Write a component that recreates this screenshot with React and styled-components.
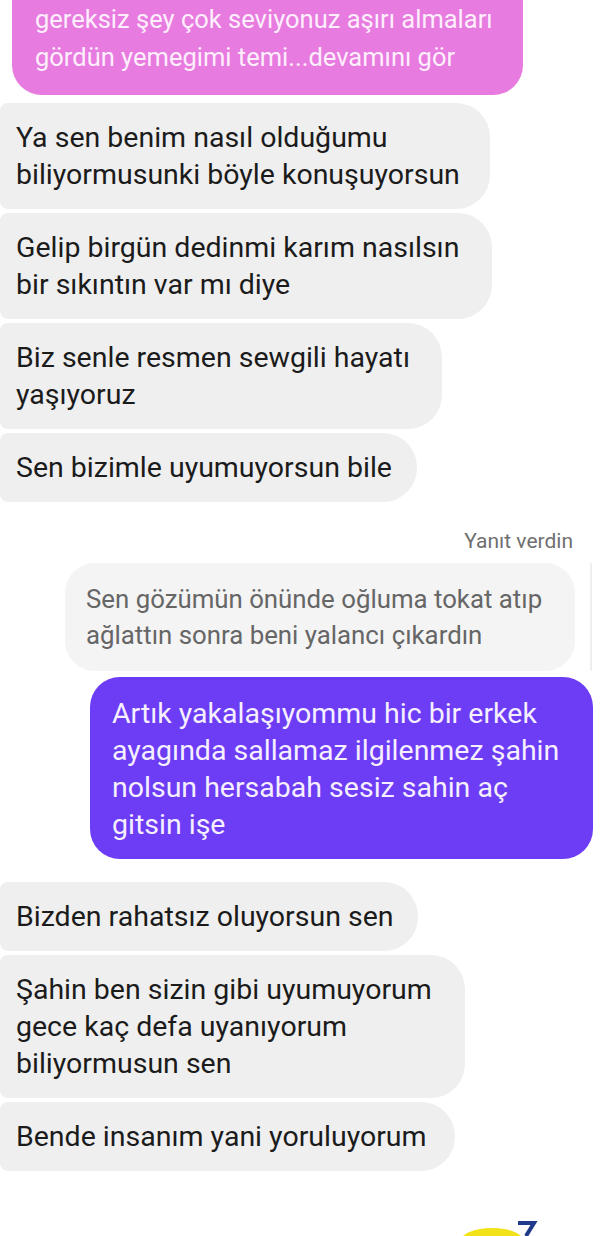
import React from 'react';
import styled, { createGlobalStyle } from 'styled-components';

const GlobalStyle = createGlobalStyle`
  html, body {
    margin: 0;
    padding: 0;
    background: #ffffff;
    overflow: hidden;
  }
  body {
    font-family: Roboto, "Noto Sans", "Liberation Sans", sans-serif;
    -webkit-font-smoothing: antialiased;
  }
`;

const Screen = styled.div`
  width: 604px;
  height: 1236px;
  overflow: hidden;
  position: relative;
  display: flex;
  flex-direction: column;
  background: #ffffff;
`;

const Group = styled.div`
  display: flex;
  flex-direction: column;
  gap: 4px;
  margin-top: ${p => p.$top || 0}px;
`;

const Bubble = styled.div`
  box-sizing: border-box;
  width: ${p => p.$width}px;
  padding: 16px 0 16px 16px;
  background: #efefef;
  color: #1b1b1b;
  font-size: 28.5px;
  line-height: 37px;
  border-radius: 8px 34px 34px 8px;
  align-self: flex-start;
`;

const Line = styled.div`
  white-space: nowrap;
`;

const PinkBubble = styled.div`
  box-sizing: border-box;
  width: 511px;
  margin: -34px 0 0 12px;
  padding: 34px 0 19px 23px;
  background: #e77bdf;
  color: #fdeefc;
  font-size: 25.5px;
  line-height: 38px;
  border-radius: 30px;
`;

const ReplyLabel = styled.div`
  align-self: flex-end;
  margin: 26px 31px 0 0;
  color: #6f6f6f;
  font-size: 21px;
  line-height: 26px;
`;

const QuoteRow = styled.div`
  display: flex;
  justify-content: flex-end;
  align-items: stretch;
  gap: 15px;
  margin: 9px 12px 0 0;
`;

const QuoteBubble = styled.div`
  box-sizing: border-box;
  width: 510px;
  padding: 18px 0 18px 21px;
  background: #f4f4f4;
  color: #666666;
  font-size: 25.8px;
  line-height: 36px;
  border-radius: 30px;
`;

const QuoteBar = styled.div`
  width: 2px;
  background: #eeeeee;
  border-radius: 1px;
`;

const SentBubble = styled.div`
  box-sizing: border-box;
  align-self: flex-end;
  width: 503px;
  margin: 6px 11px 0 0;
  padding: 18px 0 16px 22px;
  background: #6d3cf5;
  color: #f5efff;
  font-size: 28.5px;
  line-height: 37px;
  border-radius: 30px;
`;

const Watermark = styled.svg`
  position: absolute;
  right: 56px;
  bottom: 0;
`;

const received1 = [
  { w: 490, lines: ['Ya sen benim nasıl olduğumu', 'biliyormusunki böyle konuşuyorsun'] },
  { w: 492, lines: ['Gelip birgün dedinmi karım nasılsın', 'bir sıkıntın var mı diye'] },
  { w: 442, lines: ['Biz senle resmen sewgili hayatı', 'yaşıyoruz'] },
  { w: 417, lines: ['Sen bizimle uyumuyorsun bile'] },
];

const received2 = [
  { w: 418, lines: ['Bizden rahatsız oluyorsun sen'] },
  { w: 465, lines: ['Şahin ben sizin gibi uyumuyorum', 'gece kaç defa uyanıyorum', 'biliyormusun sen'] },
  { w: 455, lines: ['Bende insanım yani yoruluyorum'] },
];

const renderGroup = items =>
  items.map((m, i) => (
    <Bubble key={i} $width={m.w}>
      {m.lines.map((l, j) => <Line key={j}>{l}</Line>)}
    </Bubble>
  ));

export default function App() {
  return (
    <Screen>
      <GlobalStyle />
      <PinkBubble>
        <Line>gereksiz şey çok seviyonuz aşırı almaları</Line>
        <Line>gördün yemegimi temi...devamını gör</Line>
      </PinkBubble>

      <Group $top={8}>{renderGroup(received1)}</Group>

      <ReplyLabel>Yanıt verdin</ReplyLabel>
      <QuoteRow>
        <QuoteBubble>
          <Line>Sen gözümün önünde oğluma tokat atıp</Line>
          <Line>ağlattın sonra beni yalancı çıkardın</Line>
        </QuoteBubble>
        <QuoteBar />
      </QuoteRow>

      <SentBubble>
        <Line>Artık yakalaşıyommu hic bir erkek</Line>
        <Line>ayagında sallamaz ilgilenmez şahin</Line>
        <Line>nolsun hersabah sesiz sahin aç</Line>
        <Line>gitsin işe</Line>
      </SentBubble>

      <Group $top={23}>{renderGroup(received2)}</Group>

      <Watermark width="90" height="16" viewBox="0 0 90 16">
        <ellipse cx="34" cy="22" rx="32" ry="14" fill="#f2e21a" />
        <path d="M60 3 H76 L68 16" fill="none" stroke="#1f3a8a" strokeWidth="4" />
      </Watermark>
    </Screen>
  );
}
